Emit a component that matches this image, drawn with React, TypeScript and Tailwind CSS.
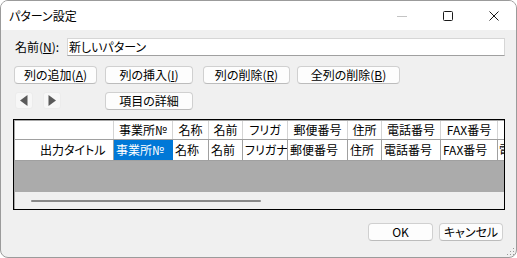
import React from 'react';

const btn =
    "flex items-center justify-center h-[18px] bg-[#fdfdfd] border border-[#d0d0d0] border-b-[#bcbcbc] rounded-[4px] text-[12px] leading-none text-black";

const heads = [
    { label: "事業所№", w: "w-[59px]" },
    { label: "名称", w: "w-[36px]" },
    { label: "名前", w: "w-[34px]" },
    { label: "フリガ", w: "w-[45px]" },
    { label: "郵便番号", w: "w-[60px]" },
    { label: "住所", w: "w-[34px]" },
    { label: "電話番号", w: "w-[59px]" },
    { label: "FAX番号", w: "w-[57px]" },
];

const cells = ["事業所№", "名称", "名前", "フリガナ", "郵便番号", "住所", "電話番号", "FAX番号"];

const App = () => {
    return (
        <div className="w-[517px] h-[258px] bg-white font-['Noto_Sans_CJK_JP',sans-serif] [font-feature-settings:'palt'] text-black">
            <div className="relative w-full h-full flex flex-col bg-[#f0f0f0] border border-[#9b9b9b] rounded-[8px] overflow-hidden">
                {/* title bar */}
                <div className="h-[29px] shrink-0 bg-white flex items-center">
                    <span className="pl-[8px] text-[12px] leading-none">パターン設定</span>
                    <div className="ml-auto flex items-center h-full">
                        <svg width="12" height="12" viewBox="0 0 12 12" className="mr-[34px]">
                            <line x1="1" y1="6.5" x2="11" y2="6.5" stroke="#c4c4c4" strokeWidth="1" />
                        </svg>
                        <svg width="12" height="12" viewBox="0 0 12 12" className="mr-[34px]">
                            <rect x="1.5" y="1.5" width="9" height="9" rx="1" fill="none" stroke="#1a1a1a" strokeWidth="1" />
                        </svg>
                        <svg width="12" height="12" viewBox="0 0 12 12" className="mr-[16px]">
                            <path d="M1.5 1.5 L10.5 10.5 M10.5 1.5 L1.5 10.5" stroke="#1a1a1a" strokeWidth="1" />
                        </svg>
                    </div>
                </div>

                {/* body */}
                <div className="flex flex-col pl-[12px] pr-[11px]">
                    <div className="mt-[8px] h-[18px] flex items-center">
                        <span className="w-[54px] pl-[2px] text-[12px] leading-none">名前(<u>N</u>):</span>
                        <div className="flex-1 h-[18px] bg-white border border-[#d6d6d6] border-b-[#a0a0a0] flex items-center pl-[1px] text-[12px] leading-none">
                            新しいパターン
                        </div>
                    </div>

                    <div className="mt-[10px] flex">
                        <button className={`${btn} ml-[1px] w-[83px] border-[#1b6fd0]`}>列の追加(<u>A</u>)</button>
                        <button className={`${btn} ml-[8px] w-[88px]`}>列の挿入(<u>I</u>)</button>
                        <button className={`${btn} ml-[10px] w-[87px]`}>列の削除(<u>R</u>)</button>
                        <button className={`${btn} ml-[7px] w-[103px]`}>全列の削除(<u>B</u>)</button>
                    </div>

                    <div className="mt-[8px] flex h-[17px]">
                        <div className="ml-[2px] w-[18px] h-[17px] rounded-[3px] bg-[#f7f7f7] border border-[#ececec] flex items-center justify-center">
                            <svg width="8" height="11" viewBox="0 0 8 11">
                                <path d="M7.5 0 L7.5 11 L0 5.5 Z" fill="#5a5a5a" />
                            </svg>
                        </div>
                        <div className="ml-[10px] w-[18px] h-[17px] rounded-[3px] bg-[#f7f7f7] border border-[#ececec] flex items-center justify-center">
                            <svg width="8" height="11" viewBox="0 0 8 11">
                                <path d="M0.5 0 L0.5 11 L8 5.5 Z" fill="#5a5a5a" />
                            </svg>
                        </div>
                        <button className={`${btn} h-[17px] ml-[44px] w-[88px]`}>項目の詳細</button>
                    </div>

                    {/* grid */}
                    <div className="mt-[10px] h-[91px] border border-black overflow-hidden">
                        <div className="h-full flex flex-col border-t border-l border-[#a8a8a8] text-[12px] leading-none">
                            <div className="h-[19px] shrink-0 flex border-b border-[#a0a0a0] bg-white">
                                <div className="w-[99px] shrink-0 border-r border-[#d4d4d4]" />
                                {heads.map((h) => (
                                    <div key={h.label} className={`${h.w} shrink-0 border-r border-[#d4d4d4] flex items-center justify-center whitespace-nowrap overflow-hidden`}>
                                        {h.label}
                                    </div>
                                ))}
                                <div className="w-[70px] shrink-0 flex items-center justify-center whitespace-nowrap">電子メール</div>
                            </div>
                            <div className="h-[21px] shrink-0 flex border-b border-[#a0a0a0] bg-white">
                                <div className="w-[99px] shrink-0 border-r border-[#a0a0a0] flex items-center pl-[25px]">出力タイトル</div>
                                {cells.map((c, i) => (
                                    <div
                                        key={c}
                                        className={`${heads[i].w} shrink-0 flex items-center pl-[2px] whitespace-nowrap overflow-hidden ${i === 0 ? "bg-[#0078d7] text-white border-r border-[#0078d7]" : "border-r border-[#a0a0a0]"}`}
                                    >
                                        {c}
                                    </div>
                                ))}
                                <div className="w-[70px] shrink-0 flex items-center pl-[1px] whitespace-nowrap">電子メール</div>
                            </div>
                            <div className="h-[31px] shrink-0 bg-[#ababab]" />
                            <div className="flex-1 bg-[#f0f0f0] pt-[8px]">
                                <div className="ml-[16px] w-[230px] h-[2px] rounded-full bg-[#888888]" />
                            </div>
                        </div>
                    </div>

                    <div className="mt-[13px] flex justify-end pr-[2px]">
                        <button className={`${btn} w-[65px]`}>OK</button>
                        <button className={`${btn} ml-[6px] w-[64px]`}>キャンセル</button>
                    </div>
                </div>

                {/* size grip */}
                <svg width="10" height="10" viewBox="0 0 10 10" className="absolute right-[1px] bottom-[1px]">
                    <rect x="8" y="2" width="1" height="1" fill="#9a9a9a" />
                    <rect x="5" y="5" width="1" height="1" fill="#9a9a9a" />
                    <rect x="8" y="5" width="1" height="1" fill="#9a9a9a" />
                    <rect x="2" y="8" width="1" height="1" fill="#9a9a9a" />
                    <rect x="5" y="8" width="1" height="1" fill="#9a9a9a" />
                    <rect x="8" y="8" width="1" height="1" fill="#9a9a9a" />
                </svg>
            </div>
        </div>
    );
};

export default App;
